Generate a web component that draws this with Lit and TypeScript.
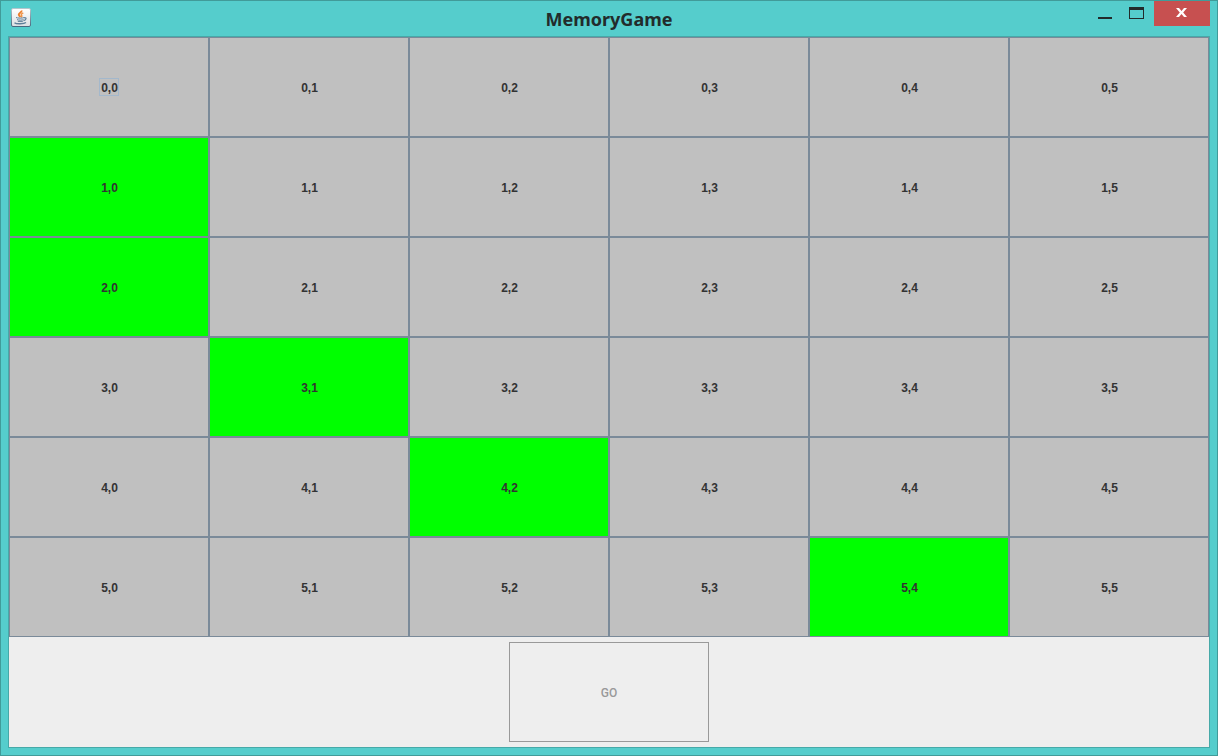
import { LitElement, css, html, svg } from "lit";
import { customElement, state } from "lit/decorators.js";
import { classMap } from "lit/directives/class-map.js";

const ROWS = 6;
const COLS = 6;

const javaIcon = svg`
  <svg class="icon" viewBox="0 0 20 20" width="20" height="20" aria-hidden="true">
    <defs>
      <linearGradient id="tile" x1="0" y1="0" x2="0" y2="1">
        <stop offset="0" stop-color="#ffffff" />
        <stop offset="1" stop-color="#dcdfe2" />
      </linearGradient>
      <linearGradient id="edge" x1="0" y1="0" x2="0" y2="1">
        <stop offset="0" stop-color="#b4c6cc" />
        <stop offset="1" stop-color="#49697f" />
      </linearGradient>
    </defs>
    <rect x="0.5" y="0.5" width="19" height="18" rx="1.5" fill="url(#tile)" stroke="url(#edge)" />
    <path d="M10.400 2.500c.8 1.900-2.800 2.300-2.600 4.100.1 1 1.200 1.400 1.400 2.400" fill="none" stroke="#ec7f2c" stroke-width="2" />
    <path d="M12.300 4.800c-1.600.8-2.600 1.500-1.700 2.600.5.700.1 1.200-.6 1.700" fill="none" stroke="#ef9448" stroke-width="1.500" />
    <path d="M5 9.500c1 .8 7 .8 8.500 0M6 11.600c1 .7 5.500.7 6.500 0M6.800 13.400h5" fill="none" stroke="#5d7f99" stroke-width="1" />
    <path d="M13 9.900c2.800-.9 2.800 2.100-.5 2.700" fill="none" stroke="#5d7f99" stroke-width="1.200" />
    <path d="M3.500 14.700c1.500 1.500 9.500 1.400 11.500-.2" fill="none" stroke="#5d7f99" stroke-width="1.300" />
  </svg>
`;

@customElement("app-root")
export class AppRoot extends LitElement {
  @state() private lit = new Set(["1,0", "2,0", "3,1", "4,2", "5,4"]);

  static styles = css`
    :host {
      display: block;
      font-family: "Liberation Sans", Arial, sans-serif;
    }
    * {
      box-sizing: border-box;
    }
    button {
      margin: 0;
      padding: 0;
      font: inherit;
      color: inherit;
      background: none;
      border: 0;
    }
    .window {
      display: flex;
      flex-direction: column;
      min-height: 100vh;
      padding: 0 7px 7px;
      border: 1px solid #419b99;
      background: #55cdcc;
    }
    .titlebar {
      display: grid;
      grid-template-columns: 124px 1fr 124px;
      height: 35px;
    }
    .icon {
      margin: 7px 3px;
    }
    .title {
      margin: 0;
      font: 700 18px/36px "Noto Sans", "Open Sans", sans-serif;
      text-align: center;
      color: #222b2b;
    }
    .controls {
      display: flex;
      justify-content: flex-end;
      align-items: flex-start;
    }
    .control {
      width: 32px;
      height: 25px;
    }
    .control svg {
      display: block;
      margin: 0 auto;
    }
    .maximize {
      width: 33px;
      padding-right: 2px;
    }
    .close {
      width: 56px;
      background: #c75050;
    }
    .content {
      flex: 1;
      display: flex;
      flex-direction: column;
      border: 1px solid #46a9a8;
      background: #eeeeee;
      color: #333333;
      font-size: 12px;
      font-weight: 700;
    }
    .board {
      flex: 1;
      display: grid;
      grid-template-columns: repeat(6, 1fr);
      grid-auto-rows: 1fr;
    }
    .cell {
      display: grid;
      place-items: center;
      border: 1px solid #7a8a99;
      background: #c0c0c0;
    }
    .lit {
      background: #00ff00;
    }
    .label {
      padding: 2px 0 0 1px;
      border: 1px solid transparent;
    }
    .focused .label {
      border-color: #a3b8cc;
    }
    .footer {
      display: flex;
      justify-content: center;
      padding: 5px;
    }
    .go {
      width: 200px;
      height: 100px;
      padding-top: 2px;
      border: 1px solid #999999;
      font-family: Roboto, "Liberation Sans", sans-serif;
      font-weight: 500;
      color: #999999;
    }
  `;

  private toggle(key: string) {
    const next = new Set(this.lit);
    if (!next.delete(key)) next.add(key);
    this.lit = next;
  }

  private renderCell(row: number, col: number) {
    const key = `${row},${col}`;
    const classes = { cell: true, lit: this.lit.has(key), focused: key === "0,0" };
    return html`<button class=${classMap(classes)} @click=${() => this.toggle(key)}>
      <span class="label">${key}</span>
    </button>`;
  }

  render() {
    const cells = Array.from({ length: ROWS * COLS }, (_, i) =>
      this.renderCell(Math.floor(i / COLS), i % COLS)
    );
    return html`
      <div class="window">
        <header class="titlebar">
          ${javaIcon}
          <h1 class="title">MemoryGame</h1>
          <div class="controls">
            <button class="control" aria-label="Minimize">
              <svg width="14" height="25"><path d="M0 16h14v2H0z" fill="#222b2b" /></svg>
            </button>
            <button class="control maximize" aria-label="Maximize">
              <svg width="15" height="25">
                <path d="M0 6h15v12H0zM1 9v8h13V9z" fill="#222b2b" fill-rule="evenodd" />
              </svg>
            </button>
            <button class="control close" aria-label="Close">
              <svg width="12" height="25">
                <path d="M0 7h3l2.500 3 2.500-3h3L7.200 11.500 11 16H8L5.500 13 3 16H0l3.800-4.500z" fill="#ffffff" />
              </svg>
            </button>
          </div>
        </header>
        <main class="content">
          <div class="board">${cells}</div>
          <div class="footer"><button class="go" disabled>GO</button></div>
        </main>
      </div>
    `;
  }
}
